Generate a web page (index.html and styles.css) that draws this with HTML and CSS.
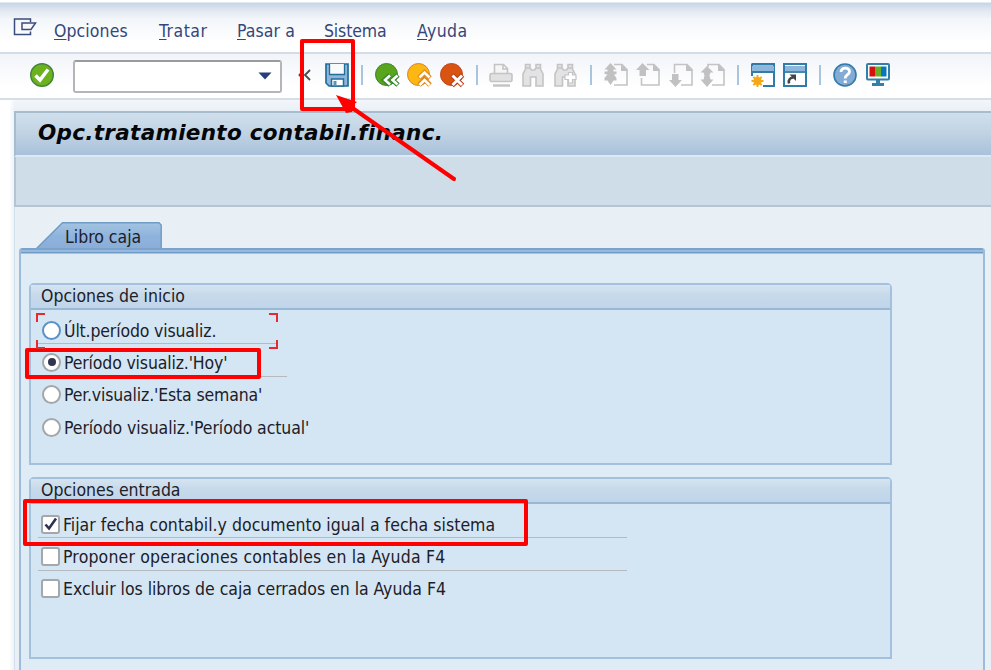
FILE: index.html
```html
<!DOCTYPE html>
<html lang="es">
<head>
<meta charset="utf-8">
<title>Opc.tratamiento contabil.financ.</title>
<link rel="stylesheet" href="styles.css">
</head>
<body>
<div class="window">
  <nav class="menu">
    <svg class="menu-icon" width="24" height="20" viewBox="0 0 24 20"><path d="M17.500 5V2H1.500V17.500H17.500V14.500M9 6H22.500L18 12.500H9Z" fill="none" stroke="#3c4c7c" stroke-width="1.500"/></svg>
    <span class="m1"><u>O</u>pciones</span>
    <span class="m2"><u>T</u>ratar</span>
    <span class="m3"><u>P</u>asar a</span>
    <span class="m4"><u>S</u>istema</span>
    <span class="m5"><u>A</u>yuda</span>
  </nav>
  <div class="toolbar">
    <svg class="ic ok" viewBox="0 0 24 24"><circle cx="12" cy="12" r="11.300" fill="#6cb21e" stroke="#44833d" stroke-width="1.400"/><path d="M5.500 12.500L10 17L18 6.500" fill="none" stroke="#fff" stroke-width="3.500"/></svg>
    <div class="command"><svg width="14" height="8" viewBox="0 0 14 8"><path d="M.5 .5H13.500L7 7.500Z" fill="#253f7b"/></svg></div>
    <svg class="chev" width="13" height="12" viewBox="0 0 13 12"><path d="M5.500 1.500L1.500 6L5.500 10.500M12 1L7 6L12 11" fill="none" stroke="#4c4c4c" stroke-width="1.900"/></svg>
    <svg class="ic save" viewBox="0 0 24 24"><path d="M1 1H23V23H4L1 20Z" fill="#8fb5dc" stroke="#216e99" stroke-width="1.700"/><path d="M4.500 1V11.500H19.500V1" fill="#f8fafc" stroke="#216e99" stroke-width="1.300"/><path d="M6.500 23V16H18.500V23Z" fill="#fff" stroke="#216e99" stroke-width="1.500"/><path d="M8.500 18H11.500V22.500H8.500Z" fill="#5d93bb"/></svg>
    <i class="sep s1"></i>
    <div class="group g1">
      <svg class="ic" viewBox="0 0 24 24"><circle cx="11.500" cy="11.500" r="11" fill="#59a51c" stroke="#37852f"/><path d="M15 12L9.500 17L15 22M23 12L17.500 17L23 22" fill="none" stroke="#35862e" stroke-width="5"/><path d="M15 12.500L10 17L15 21.500M22.500 12.500L17.500 17L22.500 21.500" fill="none" stroke="#fff" stroke-width="2.600"/></svg>
      <svg class="ic" viewBox="0 0 24 24"><circle cx="11.500" cy="11.500" r="11" fill="#fdb713" stroke="#e38118"/><path d="M12 15L17.500 9.500L23 15M12 22L17.500 16.500L23 22" fill="none" stroke="#e58a18" stroke-width="5"/><path d="M12.500 14.500L17.500 9.500L22.500 14.500M12.500 22L17.500 17L22.500 22" fill="none" stroke="#fff" stroke-width="2.600"/></svg>
      <svg class="ic" viewBox="0 0 24 24"><circle cx="11.500" cy="11.500" r="11" fill="#d95411" stroke="#bd471c"/><path d="M12 12L22.500 22.500M22.500 12L12 22.500" stroke="#b63d17" stroke-width="5"/><path d="M12.500 12.500L22 22M22 12.500L12.500 22" stroke="#fff" stroke-width="3"/></svg>
    </div>
    <i class="sep s2"></i>
    <div class="group g2 gray">
      <svg class="ic" viewBox="0 0 24 24"><path d="M5.500 10V1.500H14.500L18.500 5.500V10M14 2V6H18" fill="#f5f5f6"/><rect x="1" y="10.500" width="22" height="8" rx="1.500" fill="#e1e1e1"/><path d="M4 22.500H21" stroke-width="2.500"/></svg>
      <svg class="ic" viewBox="0 0 24 24"><path d="M4.500 1.500H9V5L10.500 7H13.500L15 5V1.500H19.500V6L22 11V23H15V14H9.500V23H2V11L4.500 6Z" fill="#e3e3e3"/><path d="M4.500 5H9M15 5H19.500"/></svg>
      <svg class="ic" viewBox="0 0 24 24"><path d="M4.500 1.500H9V5L10.500 7H13.500L15 5V1.500H19.500V6L22 11V23H15V14H9.500V23H2V11L4.500 6Z" fill="#e3e3e3"/><path d="M4.500 5H9M15 5H19.500"/><path d="M15.500 9.500H19.500V12H23V16.500H19.500V20H15.500V16.500H12V12H15.500Z" fill="#fff" stroke-width="1.200"/></svg>
    </div>
    <i class="sep s3"></i>
    <div class="group g3 gray">
      <svg class="ic" viewBox="0 0 24 24"><path d="M10 1.500H18L23 6.500V22H10" fill="none"/><path class="solid" d="M17 1V8H24ZM6.500 0L12.500 6.500H9.500V8.500H12.500V11L10 11.500L12.500 15V17.500H9.500L6.500 22L3.500 17.500H.5V15L3.500 11.500L.5 11V8.500H3.500V6.500H.5Z"/></svg>
      <svg class="ic" viewBox="0 0 24 24"><path d="M11 1.500H18L23 6.500V22H5.500V15" fill="none"/><path class="solid" d="M17 1V8H24ZM6.500 0L13.500 7H10V13H3.500V7H0Z"/></svg>
      <svg class="ic" viewBox="0 0 24 24"><path d="M5.500 10V1.500H18L23 6.500V22H12" fill="none"/><path class="solid" d="M17 1V8H24ZM3 11H9.500V17H13L6.500 24L0 17H3Z"/></svg>
      <svg class="ic" viewBox="0 0 24 24"><path d="M7 4V1.500H18L23 6.500V22H11" fill="none"/><path class="solid" d="M17 1V8H24ZM6 3L12.500 9.500H9.500L8.500 12.500L9.500 16.500H12.500L6 24L-.5 16.500H2.500L3.500 12.500L2.500 9.500H-.5Z"/></svg>
    </div>
    <i class="sep s4"></i>
    <div class="group g4">
      <svg class="ic" viewBox="0 0 24 24"><path d="M1 1H23V23H12M1 13V1" fill="#fff" stroke="#317ba7" stroke-width="2"/><path d="M1 3H23V8.500H1Z" fill="#8eb5dc"/><path d="M0 1.500H24M0 9H24" stroke="#317ba7" stroke-width="1.800"/><circle cx="6.500" cy="18" r="4.200" fill="#f8b516"/><path d="M6.500 12V24M.5 18H12.500M2.300 13.800L10.700 22.200M10.700 13.800L2.300 22.200" stroke="#f4a718" stroke-width="1.900"/></svg>
      <svg class="ic" viewBox="0 0 24 24"><rect x="1" y="1" width="22" height="22" fill="#fff" stroke="#317ba7" stroke-width="2"/><path d="M2 3H22V8H2Z" fill="#8eb5dc"/><path d="M0 9H24" stroke="#317ba7" stroke-width="1.800"/><path d="M6 20.500C5 16.500 7.500 14.500 10.500 14.500" fill="none" stroke="#444" stroke-width="2.600"/><path d="M6.500 11.500H13V18Z" fill="#444"/></svg>
    </div>
    <i class="sep s5"></i>
    <div class="group g5">
      <svg class="ic" viewBox="0 0 24 24"><circle cx="12" cy="12" r="11" fill="#83abd5" stroke="#337aa8" stroke-width="1.600"/><path d="M8 9C8 4 16.500 4 16.500 8.500C16.500 12 12.200 11.500 12.200 15.500" fill="none" stroke="#fff" stroke-width="2.800"/><path d="M10.800 17.500H13.800V20H10.800Z" fill="#fff"/></svg>
      <svg class="ic" viewBox="0 0 24 24"><rect x="1" y="1" width="22" height="15.500" rx="1" fill="#fff" stroke="#337fa9" stroke-width="2"/><path d="M3.500 3.500H9V13.500H3.500Z" fill="#d5110e"/><path d="M9 3.500H15V13.500H9Z" fill="#68ae27"/><path d="M15 3.500H20.500V13.500H15Z" fill="#0678bd"/><path d="M10 17H14V20H18V23H6V20H10Z" fill="#337fa9"/></svg>
    </div>
  </div>
  <main class="screen">
    <h1>Opc.tratamiento contabil.financ.</h1>
    <div class="appbar"></div>
    <div class="tabs">
      <svg class="tabshape" width="126" height="27" viewBox="0 0 126 27"><defs><linearGradient id="tg" x2="0" y2="1"><stop offset="0" stop-color="#a4c3e1"/><stop offset=".5" stop-color="#8fb4dc"/><stop offset="1" stop-color="#8badd8"/></linearGradient></defs><path d="M.5 26.500L26.500 .8H123L125.200 3V26.500" fill="url(#tg)" stroke="#6f9bc5" stroke-width="1.400"/></svg>
      <span class="tablabel">Libro caja</span>
    </div>
    <section class="panel">
      <fieldset class="box first">
        <h2>Opciones de inicio</h2>
        <div class="row focus"><i class="radio blue"></i><span class="r1">Últ.período visualiz.</span><b class="c tl"></b><b class="c tr"></b><b class="c bl"></b><b class="c br"></b></div>
        <div class="row today"><i class="radio on"></i><span class="r2">Período visualiz.'Hoy'</span></div>
        <div class="row"><i class="radio"></i><span class="r3">Per.visualiz.'Esta semana'</span></div>
        <div class="row"><i class="radio"></i><span class="r4">Período visualiz.'Período actual'</span></div>
      </fieldset>
      <fieldset class="box second">
        <h2>Opciones entrada</h2>
        <div class="row ruled"><i class="check"><svg width="14" height="14" viewBox="0 0 14 14"><path d="M1.500 7.500L5 11.500L12 1.500" fill="none" stroke="#303150" stroke-width="2.600"/></svg></i><span class="k1">Fijar fecha contabil.y documento igual a fecha sistema</span></div>
        <div class="row ruled"><i class="check"></i><span class="k2">Proponer operaciones contables en la Ayuda F4</span></div>
        <div class="row"><i class="check"></i><span class="k3">Excluir los libros de caja cerrados en la Ayuda F4</span></div>
      </fieldset>
    </section>
  </main>
  <div class="mark mark-save"></div>
  <div class="mark mark-today"></div>
  <div class="mark mark-date"></div>
  <svg class="arrow" width="125" height="90" viewBox="0 0 125 90"><path d="M15 12L118 84" stroke="#f00" stroke-width="4" stroke-linecap="round"/><path d="M0 0L21 7L16 11L16 17L10 18Z" fill="#f00"/></svg>
</div>
</body>
</html>
```
FILE: styles.css
```css
* { box-sizing: border-box; }
body { margin: 0; overflow: hidden; font-family: "DejaVu Sans Condensed", "DejaVu Sans", sans-serif; font-stretch: condensed; font-size: 17.500px; color: #1c2028; }
.window { position: relative; width: 991px; height: 670px; overflow: hidden; display: flex; flex-direction: column; background: linear-gradient(90deg, #fff 9px, #fff0 15px), linear-gradient(#f4f7fb 99px, #eaf0f7 110px, #eaf0f7); }
.menu { height: 54px; flex: none; display: flex; align-items: flex-start; padding: 0 0 0 13px; background: linear-gradient(#fff 2px, #c6d4e5 3px, #dfe7f1 10px, #f3f6fa 19px, #fff 42px); border-bottom: 2px solid #d5dce5; color: #35477a; white-space: nowrap; }
.menu span { line-height: 22px; margin-top: 20px; flex: none; letter-spacing: .1px; }
.menu u { text-underline-offset: 2px; text-decoration-thickness: 1px; text-decoration-skip-ink: none; }
.menu-icon { margin-top: 17px; }
.m1 { width: 105px; margin-left: 17px; }
.m2 { width: 78px; }
.m3 { width: 87px; }
.m4 { width: 93px; }
.menu .m2 { letter-spacing: .5px; }
.menu .m4 { letter-spacing: -.15px; }
.menu .m5 { letter-spacing: .4px; }
.toolbar { height: 46px; flex: none; display: flex; align-items: center; padding-left: 30px; padding-bottom: 2px; background: linear-gradient(#f1f4f9, #fff 32px); border-bottom: 2px solid #d8dee5; }
.toolbar > * { flex: none; }
.ic { width: 24px; height: 24px; display: block; overflow: visible; }
.command { width: 209px; height: 33px; margin: 2px 0 0 19px; border: 2px solid #b3b5b8; border-top-color: #999b9e; border-radius: 3px; background: #fff; display: flex; align-items: center; justify-content: flex-end; padding-right: 8px; }
.chev { margin-left: 16px; }
.save { margin-left: 14px; }
.sep { width: 2px; height: 20px; background: #a8c4df; }
.group { display: flex; gap: 8.300px; }
.s1 { margin-left: 12px; } .g1 { margin-left: 12px; }
.s2 { margin-left: 12px; } .g2 { margin-left: 11px; }
.s3 { margin-left: 13px; } .g3 { margin-left: 12px; }
.s4 { margin-left: 12px; } .g4 { margin-left: 12px; }
.s5 { margin-left: 12px; } .g5 { margin-left: 12px; }
.gray svg { stroke: #c4c4c4; stroke-width: 1.600; }
.gray .solid { fill: #c1c1c1; stroke: none; }
.screen { flex: 1; margin: 11px 0 0 14px; display: flex; flex-direction: column; background: #e8f0f6; border-left: 1px solid #d3dfea; }
h1 { margin: 0 0 0 -1px; height: 46px; flex: none; border: 2px solid #a8bccf; border-right: 0; border-bottom-color: #dce8f2; background: linear-gradient(#cfdfeb, #c2d4e4 45%, #a9c1da); padding-left: 22px; font: italic bold 21.500px/40px "DejaVu Sans", sans-serif; letter-spacing: .3px; color: #050608; white-space: nowrap; }
.appbar { height: 50px; flex: none; margin-left: -1px; background: #cfdde8; border: solid #b4c4d2; border-width: 0 0 2px 2px; }
.tabs { height: 41px; flex: none; position: relative; padding: 15px 0 0 21px; }
.tabshape { display: block; }
.tablabel { position: absolute; left: 50px; top: 19px; line-height: 22px; white-space: nowrap; }
.panel { position: relative; margin: 0 6px 0 4px; flex: 1; border: solid #9dbcdc; border-width: 0 2px; border-radius: 3px 3px 0 0; padding: 35px 91px 0 8px; background: linear-gradient(#7ba3cc 0 2px, #98b9de 2px 4px, #6f9bc7 4px 5px, #dfecf5 6px); }
.box { margin: 0 0 12px; padding: 0; min-width: 0; height: 182px; border: 2px solid #a3c0dc; border-radius: 5px 5px 0 0; background: #d4e6f4; }
h2 { margin: 0; height: 25px; padding-left: 10px; font: inherit; line-height: 22px; background: linear-gradient(#d5e4f1, #c8daea 40%, #bfd5ea); border-bottom: 2px solid #99b8d3; white-space: nowrap; }
.row { position: relative; height: 32.300px; display: flex; align-items: center; padding-left: 10px; white-space: nowrap; }
.first h2 + .row, .second h2 + .row { margin-top: 4px; }
.row span { line-height: 22px; margin-top: 1px; }
.r1, .r2, .r3 { letter-spacing: -.150px; }
.r4 { letter-spacing: -.080px; }
.k1 { letter-spacing: .030px; }
.k2 { letter-spacing: .180px; }
.k3 { letter-spacing: -.030px; }
.radio { width: 19px; height: 19px; flex: none; border: 2px solid #a3a7aa; border-radius: 50%; background: #fff; margin: 0 3px 0 1px; display: grid; place-items: center; }
.radio.blue { border-color: #5b91c6; }
.radio.on::after { content: ""; width: 8px; height: 8px; border-radius: 50%; background: #33344f; }
.check { width: 19px; height: 19px; flex: none; border: 2px solid #a6a7a8; border-radius: 3px; background: #fff; margin-right: 3px; display: grid; place-items: center; }
.focus::after, .today::after, .ruled::after { content: ""; position: absolute; left: 7px; bottom: 2px; height: 1px; background: #b6babf; }
.focus::after { width: 240px; }
.today::after { width: 249px; }
.ruled::after { width: 589px; }
.c { position: absolute; width: 9px; height: 9px; border: 0 solid #e42b31; z-index: 1; }
.tl { left: 5px; top: -1px; border-width: 2px 0 0 2px; }
.tr { left: 238px; top: -1px; border-width: 2px 2px 0 0; }
.bl { left: 5px; top: 26px; border-width: 0 0 2px 2px; }
.br { left: 238px; top: 26px; border-width: 0 2px 2px 0; }
.mark { position: absolute; border: 4px solid #f00; border-radius: 2px; }
.mark-save { left: 300px; top: 39px; width: 55px; height: 72px; }
.mark-today { left: 25px; top: 348px; width: 236px; height: 31px; }
.mark-date { left: 23px; top: 499px; width: 505px; height: 47px; }
.arrow { position: absolute; left: 336px; top: 95px; }
```
